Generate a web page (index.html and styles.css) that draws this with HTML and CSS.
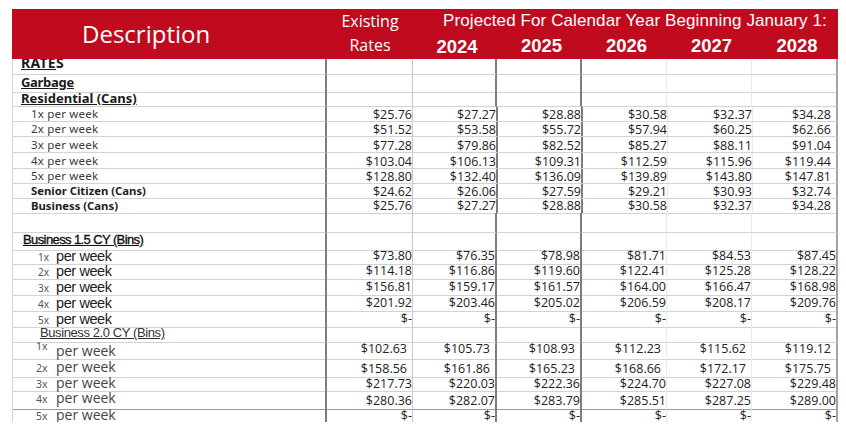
FILE: index.html
```html
<!DOCTYPE html>
<html>
<head>
<meta charset="utf-8">
<link rel="stylesheet" href="styles.css">
</head>
<body>
<div class="sheet">
  <div class="head">
    <div class="h-desc">Description</div>
    <div class="h-exist">Existing<br>Rates</div>
    <div class="h-proj">
      <div class="h-title">Projected For Calendar Year Beginning January 1:</div>
      <div class="h-years"><span class="y24">2024</span><span>2025</span><span>2026</span><span>2027</span><span>2028</span></div>
    </div>
  </div>

  <div class="row h16"><div class="c d clip"><span class="rates"><u>RATE</u>S</span></div><div class="c"></div><div class="c"></div><div class="c"></div><div class="c"></div><div class="c"></div><div class="c"></div></div>
  <div class="row h16"><div class="c d"><span class="lbl-b lb2">Garbage</span></div><div class="c"></div><div class="c"></div><div class="c"></div><div class="c"></div><div class="c"></div><div class="c"></div></div>
  <div class="row h16"><div class="c d"><span class="lbl-b lb1">Residential (Cans)</span></div><div class="c"></div><div class="c"></div><div class="c"></div><div class="c"></div><div class="c"></div><div class="c"></div></div>

  <div class="row h15 up"><div class="c d"><span class="lbl-s">1x per week</span></div><div class="c">$25.76</div><div class="c">$27.27</div><div class="c">$28.88</div><div class="c">$30.58</div><div class="c">$32.37</div><div class="c">$34.28</div></div>
  <div class="row h15 up"><div class="c d"><span class="lbl-s">2x per week</span></div><div class="c">$51.52</div><div class="c">$53.58</div><div class="c">$55.72</div><div class="c">$57.94</div><div class="c">$60.25</div><div class="c">$62.66</div></div>
  <div class="row h16 up"><div class="c d"><span class="lbl-s">3x per week</span></div><div class="c">$77.28</div><div class="c">$79.86</div><div class="c">$82.52</div><div class="c">$85.27</div><div class="c">$88.11</div><div class="c">$91.04</div></div>
  <div class="row h16 up"><div class="c d"><span class="lbl-s">4x per week</span></div><div class="c">$103.04</div><div class="c">$106.13</div><div class="c">$109.31</div><div class="c">$112.59</div><div class="c">$115.96</div><div class="c">$119.44</div></div>
  <div class="row h15 up"><div class="c d"><span class="lbl-s">5x per week</span></div><div class="c">$128.80</div><div class="c">$132.40</div><div class="c">$136.09</div><div class="c">$139.89</div><div class="c">$143.80</div><div class="c">$147.81</div></div>
  <div class="row h15 up"><div class="c d"><span class="lbl-sb">Senior Citizen (Cans)</span></div><div class="c">$24.62</div><div class="c">$26.06</div><div class="c">$27.59</div><div class="c">$29.21</div><div class="c">$30.93</div><div class="c">$32.74</div></div>
  <div class="row h14 up nb1"><div class="c d"><span class="lbl-sb">Business (Cans)</span></div><div class="c">$25.76</div><div class="c">$27.27</div><div class="c">$28.88</div><div class="c">$30.58</div><div class="c">$32.37</div><div class="c">$34.28</div></div>

  <div class="row h20"><div class="c d"></div><div class="c"></div><div class="c"></div><div class="c"></div><div class="c"></div><div class="c"></div><div class="c"></div></div>

  <div class="row h15"><div class="c d"><span class="lbl-c">Business 1.5 CY (Bins)</span></div><div class="c"></div><div class="c"></div><div class="c"></div><div class="c"></div><div class="c"></div><div class="c"></div></div>
  <div class="row h15 nb2"><div class="c d"><span class="pw1"><span class="x">1x</span><span class="w">per week</span></span></div><div class="c">$73.80</div><div class="c">$76.35</div><div class="c">$78.98</div><div class="c">$81.71</div><div class="c">$84.53</div><div class="c">$87.45</div></div>
  <div class="row h16 nb2"><div class="c d"><span class="pw1"><span class="x">2x</span><span class="w">per week</span></span></div><div class="c">$114.18</div><div class="c">$116.86</div><div class="c">$119.60</div><div class="c">$122.41</div><div class="c">$125.28</div><div class="c">$128.22</div></div>
  <div class="row h16 nb2"><div class="c d"><span class="pw1"><span class="x">3x</span><span class="w">per week</span></span></div><div class="c">$156.81</div><div class="c">$159.17</div><div class="c">$161.57</div><div class="c">$164.00</div><div class="c">$166.47</div><div class="c">$168.98</div></div>
  <div class="row h16 nb2"><div class="c d"><span class="pw1"><span class="x">4x</span><span class="w">per week</span></span></div><div class="c">$201.92</div><div class="c">$203.46</div><div class="c">$205.02</div><div class="c">$206.59</div><div class="c">$208.17</div><div class="c">$209.76</div></div>
  <div class="row h15 nb2"><div class="c d"><span class="pw1"><span class="x">5x</span><span class="w">per week</span></span></div><div class="c">$-</div><div class="c">$-</div><div class="c">$-</div><div class="c">$-</div><div class="c">$-</div><div class="c">$-</div></div>

  <div class="row h17"><div class="c d"><span class="lbl-c2">Business 2.0 CY (Bins)</span></div><div class="c"></div><div class="c"></div><div class="c"></div><div class="c"></div><div class="c"></div><div class="c"></div></div>
  <div class="row h16 nb4 pr5"><div class="c d"><span class="pw2 lb3"><span class="x sup">1x</span><span class="w">per week</span></span></div><div class="c">$102.63</div><div class="c">$105.73</div><div class="c">$108.93</div><div class="c">$112.23</div><div class="c">$115.62</div><div class="c">$119.12</div></div>
  <div class="row h16 nb2 pr5"><div class="c d"><span class="pw2 lb5"><span class="x">2x</span><span class="w">per week</span></span></div><div class="c">$158.56</div><div class="c">$161.86</div><div class="c">$165.23</div><div class="c">$168.66</div><div class="c">$172.17</div><div class="c">$175.75</div></div>
  <div class="row h15 nb1"><div class="c d"><span class="pw2 lb3"><span class="x">3x</span><span class="w">per week</span></span></div><div class="c">$217.73</div><div class="c">$220.03</div><div class="c">$222.36</div><div class="c">$224.70</div><div class="c">$227.08</div><div class="c">$229.48</div></div>
  <div class="row h17 nb2 dark"><div class="c d"><span class="pw2 lb6"><span class="x">4x</span><span class="w">per week</span></span></div><div class="c">$280.36</div><div class="c">$282.07</div><div class="c">$283.79</div><div class="c">$285.51</div><div class="c">$287.25</div><div class="c">$289.00</div></div>
  <div class="row h15 nb3"><div class="c d"><span class="pw2 lb5"><span class="x">5x</span><span class="w">per week</span></span></div><div class="c">$-</div><div class="c">$-</div><div class="c">$-</div><div class="c">$-</div><div class="c">$-</div><div class="c">$-</div></div>
</div>
</body>
</html>
```

FILE: styles.css
```css
html, body {
  margin: 0;
  background: #ffffff;
}
body {
  padding: 9px 0 0 12px;
}
.sheet {
  width: 826px;
}

/* header band */
.head {
  display: grid;
  grid-template-columns: 315px 86px 425px;
  height: 50px;
  background: #c00a1e;
  color: #ffffff;
}
.h-desc {
  font-family: "Open Sans", sans-serif;
  font-size: 24px;
  line-height: 50px;
  padding-left: 70px;
}
.h-exist {
  font-family: "Open Sans", sans-serif;
  font-size: 16px;
  line-height: 24px;
  text-align: center;
}
.h-proj {
  padding-top: 2px;
}
.h-title {
  font-family: "Liberation Sans", Arial, sans-serif;
  font-size: 17px;
  line-height: 20px;
  letter-spacing: 0.1px;
  padding-left: 30px;
  white-space: nowrap;
}
.h-years {
  display: grid;
  grid-template-columns: 84px 85px 85px 85px 86px;
  margin-top: 4px;
  font-family: "Liberation Sans", Arial, sans-serif;
  font-weight: bold;
  font-size: 18.5px;
  line-height: 22px;
  text-align: center;
}
.h-years span {
  padding-left: 4px;
}
.h-years .y24 {
  position: relative;
  top: 1px;
}

/* body rows */
.row {
  display: grid;
  grid-template-columns: 314px 86px 84px 85px 85px 85px 86px;
  border-left: 1px solid #d4d4d4;
  box-sizing: border-box;
}
.h14 { height: 14px; }
.h15 { height: 15px; }
.h16 { height: 16px; }
.h17 { height: 17px; }
.h20 { height: 20px; }

.c {
  box-sizing: border-box;
  border-bottom: 1px solid #d3d3d3;
  display: flex;
  align-items: flex-end;
  justify-content: flex-end;
  min-width: 0;
  white-space: nowrap;
  font-family: "Open Sans", sans-serif;
  font-size: 12.5px;
  line-height: 12px;
  color: #222222;
  padding-right: var(--pr, 0px);
  padding-bottom: var(--nb, 0px);
}
.c:nth-child(1) { border-right: 2px solid #7d7d7d; }
.c:nth-child(2) { border-right: 1px solid #c8c8c8; }
.c:nth-child(3) { border-right: 2px solid #7d7d7d; }
.c:nth-child(4) { border-right: 2px solid #7d7d7d; }
.c:nth-child(5) { border-right: 1px solid #e9e9e9; }
.c:nth-child(6) { border-right: 1px solid #e9e9e9; }
.c:nth-child(7) { border-right: 2px solid #a3a3a3; }

.up .c:nth-child(7) { padding-right: 5px; }
.up .c:nth-child(n+3):nth-child(-n+6) { margin-right: -1px; }

.nb1 { --nb: 1px; }
.nb2 { --nb: 2px; }
.nb3 { --nb: 3px; }
.nb4 { --nb: 4px; }
.pr5 { --pr: 5px; }
.dark .c { border-bottom-color: #9a9a9a; }

.c.d {
  justify-content: flex-start;
  padding: 0;
  color: #1a1a1a;
}
.c.clip {
  overflow: hidden;
  align-items: flex-start;
}

.rates {
  font-family: "Noto Sans", sans-serif;
  font-weight: bold;
  font-size: 14px;
  line-height: 15px;
  letter-spacing: 0.3px;
  margin-top: -4px;
  padding-left: 8px;
}
.lbl-b {
  font-family: "Noto Sans", sans-serif;
  font-weight: bold;
  font-size: 13px;
  line-height: 15px;
  text-decoration: underline;
  padding-left: 8px;
}
.lb1 { padding-bottom: 0px; }
.lb2 { padding-bottom: 2px; letter-spacing: -0.3px; }
.lb3 { padding-bottom: 1px; }
.lb5 { padding-bottom: 3px; }
.lb6 { padding-bottom: 4px; }

.lbl-s {
  font-family: "Noto Sans", sans-serif;
  font-size: 11.5px;
  line-height: 13px;
  letter-spacing: 0.2px;
  color: #3a3a3a;
  padding-left: 18px;
  padding-bottom: 1px;
}
.lbl-sb {
  font-family: "Noto Sans", sans-serif;
  font-weight: bold;
  font-size: 11.3px;
  line-height: 13px;
  color: #222222;
  padding-left: 18px;
  padding-bottom: 1px;
}
.lbl-c {
  font-family: "Liberation Sans", Arial, sans-serif;
  font-size: 13px;
  line-height: 14px;
  letter-spacing: -0.6px;
  color: #111111;
  -webkit-text-stroke: 0.35px #111111;
  text-decoration: underline;
  padding-left: 10px;
  padding-bottom: 3px;
}
.lbl-c2 {
  font-family: "Liberation Sans", Arial, sans-serif;
  font-size: 13px;
  line-height: 14px;
  letter-spacing: -0.4px;
  color: #333333;
  text-decoration: underline;
  padding-left: 27px;
  padding-bottom: 2px;
}

.pw1 {
  display: flex;
  align-items: baseline;
  padding-left: 25px;
}
.pw1 .x {
  font-family: "Noto Sans", sans-serif;
  font-size: 10px;
  color: #555555;
  width: 18px;
}
.pw1 .w {
  font-family: "Liberation Sans", Arial, sans-serif;
  font-size: 14.5px;
  line-height: 16px;
  letter-spacing: -0.4px;
  color: #222222;
}

.pw2 {
  display: flex;
  align-items: baseline;
  padding-left: 23px;
}
.pw2 .x {
  font-family: "Noto Sans", sans-serif;
  font-size: 10.5px;
  color: #555555;
  width: 20px;
}
.pw2 .x.sup {
  align-self: flex-start;
  line-height: 10px;
  margin-top: -2px;
}
.pw2 .w {
  font-family: "Open Sans", sans-serif;
  font-size: 14px;
  line-height: 15px;
  color: #444444;
}
```
